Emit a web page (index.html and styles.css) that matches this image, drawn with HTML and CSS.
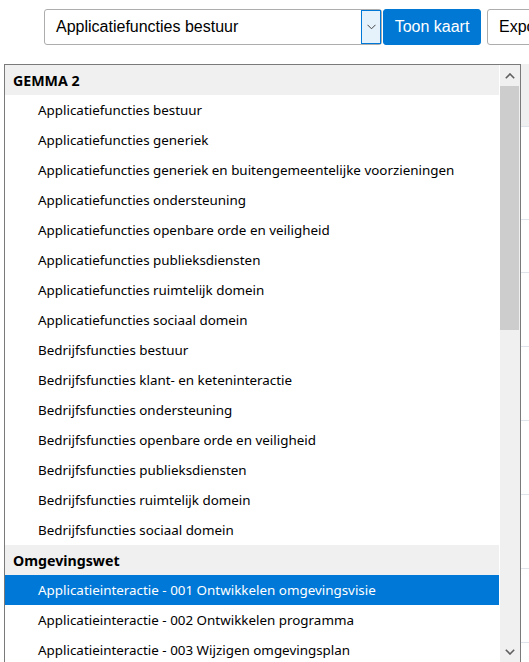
FILE: index.html
```html
<!DOCTYPE html>
<html lang="nl">
<head>
  <meta charset="UTF-8">
  <meta name="viewport" content="width=device-width, initial-scale=1.0">
  <title>Kaart kiezen</title>
  <link rel="stylesheet" href="styles.css">
</head>
<body>
  <header class="toolbar">
    <div class="select-box">
      <span class="select-value">Applicatiefuncties bestuur</span>
      <span class="select-arrow">
        <svg width="9" height="6" viewBox="0 0 9 6"><polyline points="0.5,0.8 4.5,4.8 8.5,0.8" fill="none" stroke="#444" stroke-width="1"/></svg>
      </span>
    </div>
    <button class="btn btn-primary">Toon kaart</button>
    <button class="btn">Exporteer</button>
  </header>

  <main class="content">
    <table class="overview">
      <tbody>
        <tr class="row-a"><td></td><td></td></tr>
        <tr class="row-b"><td></td><td></td></tr>
        <tr class="row-c"><td></td><td></td></tr>
        <tr class="row-d"><td></td><td></td></tr>
        <tr class="row-d"><td></td><td></td></tr>
        <tr class="row-d"><td></td><td></td></tr>
        <tr class="row-d"><td></td><td></td></tr>
        <tr class="row-d"><td></td><td></td></tr>
      </tbody>
    </table>
  </main>

  <div class="dropdown">
    <ul class="options">
      <li class="group">GEMMA 2</li>
      <li class="option">Applicatiefuncties bestuur</li>
      <li class="option">Applicatiefuncties generiek</li>
      <li class="option">Applicatiefuncties generiek en buitengemeentelijke voorzieningen</li>
      <li class="option">Applicatiefuncties ondersteuning</li>
      <li class="option">Applicatiefuncties openbare orde en veiligheid</li>
      <li class="option">Applicatiefuncties publieksdiensten</li>
      <li class="option">Applicatiefuncties ruimtelijk domein</li>
      <li class="option">Applicatiefuncties sociaal domein</li>
      <li class="option">Bedrijfsfuncties bestuur</li>
      <li class="option">Bedrijfsfuncties klant- en keteninteractie</li>
      <li class="option">Bedrijfsfuncties ondersteuning</li>
      <li class="option">Bedrijfsfuncties openbare orde en veiligheid</li>
      <li class="option">Bedrijfsfuncties publieksdiensten</li>
      <li class="option">Bedrijfsfuncties ruimtelijk domein</li>
      <li class="option">Bedrijfsfuncties sociaal domein</li>
      <li class="group">Omgevingswet</li>
      <li class="option selected">Applicatieinteractie - 001 Ontwikkelen omgevingsvisie</li>
      <li class="option">Applicatieinteractie - 002 Ontwikkelen programma</li>
      <li class="option">Applicatieinteractie - 003 Wijzigen omgevingsplan</li>
    </ul>
    <div class="scrollbar">
      <span class="scroll-btn">
        <svg width="10" height="6" viewBox="0 0 10 6"><polyline points="0.8,5.2 5,1 9.2,5.2" fill="none" stroke="#606060" stroke-width="1.6"/></svg>
      </span>
      <span class="scroll-thumb"></span>
      <span class="scroll-track"></span>
      <span class="scroll-btn">
        <svg width="10" height="6" viewBox="0 0 10 6"><polyline points="0.8,0.8 5,5 9.2,0.8" fill="none" stroke="#606060" stroke-width="1.6"/></svg>
      </span>
    </div>
  </div>
</body>
</html>
```

FILE: styles.css
```css
body {
  margin: 0;
  width: 529px;
  height: 662px;
  overflow: hidden;
  position: relative;
  background: #fff;
  font-family: "Liberation Sans", Arial, sans-serif;
  color: #000;
}

.toolbar {
  display: flex;
  padding: 9px 0 0 44px;
  height: 36px;
  white-space: nowrap;
}

.toolbar > * {
  flex: none;
}

.select-box {
  width: 338px;
  height: 36px;
  box-sizing: border-box;
  border: 1px solid #adadad;
  border-radius: 3px;
  display: flex;
  align-items: center;
  justify-content: space-between;
  font-size: 16px;
}

.select-value {
  padding-left: 11px;
}

.select-arrow {
  width: 20px;
  height: 34px;
  box-sizing: border-box;
  border: 1px solid #0078d7;
  background: #e5f1fb;
  display: flex;
  align-items: center;
  justify-content: center;
}

.btn {
  height: 36px;
  margin-left: 6px;
  padding: 0 11px;
  border: 1px solid #adadad;
  border-radius: 3px;
  background: #fff;
  color: #000;
  font-family: "Liberation Sans", Arial, sans-serif;
  font-size: 16px;
}

.btn-primary {
  width: 98px;
  margin-left: 1px;
  padding: 0;
  border-color: #0078d4;
  background: #0078d4;
  color: #fff;
}

.content {
  margin-top: 19px;
  padding-left: 4px;
}

.overview {
  width: 540px;
  border-collapse: collapse;
  font-size: 14px;
}

.overview td {
  border-bottom: 1px solid #dee4ea;
  padding: 0;
  vertical-align: middle;
}

.overview .row-a td {
  height: 62px;
  background: #f0f0f0;
}

.overview .row-b td {
  height: 92px;
}

.overview .row-c td {
  height: 52px;
}

.overview .row-d td {
  height: 73px;
}

.dropdown {
  position: absolute;
  left: 4px;
  top: 64px;
  width: 517px;
  height: 599px;
  box-sizing: border-box;
  border: 1px solid #7a7a7a;
  background: #fff;
  display: flex;
  font-family: "Noto Sans", "Segoe UI", sans-serif;
  font-size: 13.4px;
}

.options {
  list-style: none;
  margin: 0;
  padding: 0;
  width: 495px;
  overflow: hidden;
}

.options li {
  height: 30px;
  line-height: 31px;
  margin-right: 1px;
  white-space: nowrap;
}

.group {
  padding-left: 8px;
  background: #f0f0f0;
  font-weight: 700;
  font-size: 14.2px;
}

.option {
  padding-left: 33px;
}

.option.selected {
  background: #0078d7;
  color: #fff;
}

.scrollbar {
  width: 20px;
  background: #f0f0f0;
  display: flex;
  flex-direction: column;
}

.scroll-btn {
  height: 21px;
  flex: none;
  display: flex;
  align-items: center;
  justify-content: center;
}

.scroll-thumb {
  height: 244px;
  flex: none;
  margin-right: 1px;
  background: #cdcdcd;
}

.scroll-track {
  flex: 1;
}
```
